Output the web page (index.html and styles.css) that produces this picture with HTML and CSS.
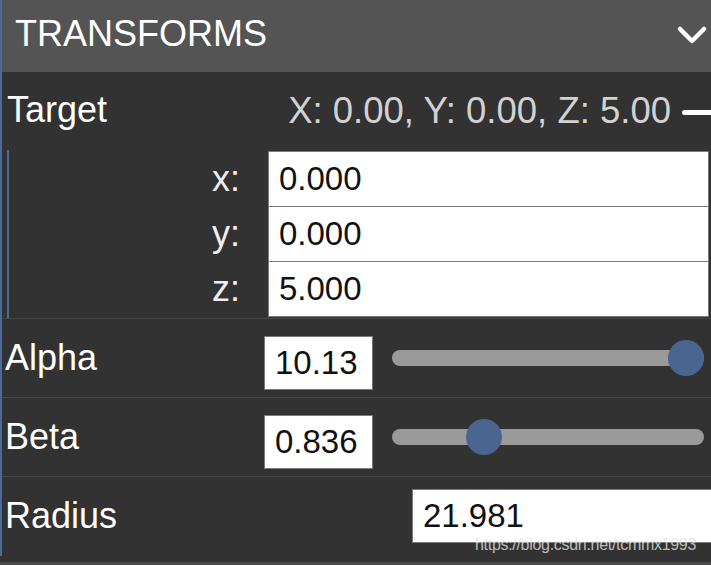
FILE: index.html
```html
<!DOCTYPE html>
<html lang="en">

<head>
    <meta charset="UTF-8">
    <title>Transforms</title>
    <link rel="stylesheet" href="styles.css">
</head>

<body>

    <div class="panel">
        <div class="panel-header">
            <span class="panel-title">TRANSFORMS</span>
            <svg class="chevron" width="30" height="19" viewBox="0 0 30 19">
                <polyline points="3,3 15,15 27,3" fill="none" stroke="#fff" stroke-width="4.5" stroke-linecap="round" stroke-linejoin="round"/>
            </svg>
        </div>

        <div class="row row-target">
            <span class="row-label">Target</span>
            <span class="target-value">X: 0.00, Y: 0.00, Z: 5.00</span>
            <span class="collapse-dash"></span>
        </div>

        <div class="vector">
            <div class="vector-row">
                <label class="vector-label">x:</label>
                <input class="vector-input" type="text" value="0.000">
            </div>
            <div class="vector-row">
                <label class="vector-label">y:</label>
                <input class="vector-input" type="text" value="0.000">
            </div>
            <div class="vector-row">
                <label class="vector-label">z:</label>
                <input class="vector-input" type="text" value="5.000">
            </div>
        </div>

        <div class="row row-slider">
            <span class="row-label slider-label">Alpha</span>
            <input class="number-input" type="text" value="10.131">
            <input class="slider" type="range" min="0" max="1" step="0.001" value="1">
        </div>

        <div class="row row-slider">
            <span class="row-label slider-label">Beta</span>
            <input class="number-input" type="text" value="0.836">
            <input class="slider" type="range" min="0" max="1" step="0.001" value="0.267">
        </div>

        <div class="row row-radius">
            <span class="row-label radius-label">Radius</span>
            <input class="radius-input" type="text" value="21.981">
        </div>
    </div>

    <div class="watermark">https://blog.csdn.net/tcmmx1993</div>

</body>

</html>
```

FILE: styles.css
```css
body {
    font-family: 'Liberation Sans', Arial, sans-serif;
    margin: 0;
    padding: 0;
    background-color: #323232;
    color: #f2f2f2;
    height: 565px;
    overflow: hidden;
    position: relative;
}

.panel {
    border-left: 2px solid #4a6a9a;
    height: 556px;
    box-sizing: border-box;
}

.panel-header {
    background-color: #545454;
    height: 72px;
    box-sizing: border-box;
    padding: 0 4px 4px 13px;
    display: flex;
    align-items: center;
    justify-content: space-between;
}

.panel-title {
    font-size: 36px;
    color: #fff;
}

.chevron {
    display: block;
    margin-top: 2px;
}

.row {
    display: flex;
    align-items: center;
    font-size: 36px;
}

.row-target {
    height: 78px;
    padding-left: 5px;
    padding-bottom: 2px;
    box-sizing: border-box;
}

.row-label {
    color: #fff;
    flex-shrink: 0;
}

.row-target .row-label {
    flex: 1;
}

.target-value {
    color: #d2d2d2;
    font-size: 36.5px;
    margin-top: 2px;
}

.collapse-dash {
    width: 32px;
    height: 5px;
    background-color: #fff;
    border-radius: 3px;
    margin-left: 11px;
    margin-right: -3px;
    margin-top: 4px;
    flex-shrink: 0;
}

.vector {
    margin-left: 5px;
    border-left: 2px solid #4a6a9a;
    padding: 1px 0 2px;
}

.vector-row {
    display: flex;
    align-items: center;
    height: 55px;
}

.vector-label {
    width: 231px;
    padding-right: 28px;
    text-align: right;
    font-size: 36px;
    color: #eee;
}

.vector-input,
.number-input,
.radius-input {
    font-family: 'Liberation Sans', Arial, sans-serif;
    font-size: 33px;
    color: #111;
    background-color: #fff;
    border: 1px solid #7a7a7a;
    box-sizing: border-box;
    padding: 0 0 0 10px;
    outline: none;
}

.vector-input {
    flex: 1;
    height: 56px;
    margin-right: 2px;
}

.row-slider,
.row-radius {
    height: 79px;
    border-top: 1px solid #474747;
    box-sizing: border-box;
    padding-left: 3px;
}

.slider-label {
    width: 259px;
}

.number-input {
    width: 109px;
    height: 54px;
    margin-top: 10px;
    padding-left: 10px;
    padding-right: 12px;
    flex-shrink: 0;
}

.slider {
    -webkit-appearance: none;
    appearance: none;
    flex: 1;
    height: 16px;
    margin: 0 7px 0 19px;
    background-color: #9a9a9a;
    border-radius: 8px;
    outline: none;
}

.slider::-webkit-slider-thumb {
    -webkit-appearance: none;
    width: 36px;
    height: 36px;
    border-radius: 50%;
    background-color: #4a6590;
    border: none;
    cursor: pointer;
}

.radius-label {
    width: 407px;
}

.radius-input {
    width: 310px;
    height: 54px;
    flex-shrink: 0;
}

.watermark {
    position: absolute;
    left: 475px;
    top: 536px;
    font-size: 16px;
    color: rgba(225, 225, 225, 0.8);
    letter-spacing: -0.3px;
}

body::after {
    content: "";
    display: block;
    height: 3px;
    background-color: #4a4a4a;
    margin-top: 6px;
}
```
